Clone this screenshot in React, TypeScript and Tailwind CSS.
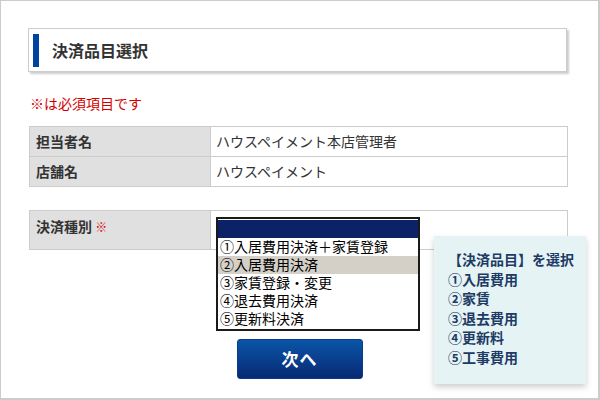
import { useState } from 'react';

const font = { fontFamily: '"Noto Sans CJK JP", "Noto Sans", sans-serif' };

const options = [
  '①入居費用決済＋家賃登録',
  '②入居費用決済',
  '③家賃登録・変更',
  '④退去費用決済',
  '⑤更新料決済',
];

const guide = ['①入居費用', '②家賃', '③退去費用', '④更新料', '⑤工事費用'];

export default function App() {
  const [selected, setSelected] = useState(1);

  return (
    <div
      className="relative w-[600px] h-[400px] bg-white border-t border-l border-r-2 border-b-2 border-[#cccccc] px-[27px] pt-[27px] text-[#333333]"
      style={font}
    >
      <div className="flex items-center h-[44px] w-[539px] bg-white border border-[#cccccc] shadow-[2px_2px_2px_rgba(0,0,0,0.2)]">
        <div className="ml-[4px] w-[6px] h-[33px] bg-[#0043a0]" />
        <h1 className="ml-[13px] text-[16px] font-bold leading-none text-[#333333]">決済品目選択</h1>
      </div>

      <p className="mt-[21px] ml-[2px] text-[14px] leading-[20px] text-[#d40000]">※は必須項目です</p>

      <table className="mt-[13px] ml-[1px] w-[539px] border-collapse text-[14px]">
        <tbody>
          <tr className="h-[30px]">
            <th className="w-[181px] bg-[#e0e0e0] border border-[#cccccc] pl-[6px] text-left font-bold">担当者名</th>
            <td className="border border-[#cccccc] pl-[5px]">ハウスペイメント本店管理者</td>
          </tr>
          <tr className="h-[30px]">
            <th className="bg-[#e0e0e0] border border-[#cccccc] pl-[6px] text-left font-bold">店舗名</th>
            <td className="border border-[#cccccc] pl-[5px]">ハウスペイメント</td>
          </tr>
        </tbody>
      </table>

      <div className="mt-[23px] ml-[1px] flex w-[539px] h-[40px] border border-[#cccccc] text-[14px]">
        <div className="w-[181px] bg-[#e0e0e0] border-r border-[#cccccc] pl-[6px] pt-[5px] leading-[20px] font-bold">
          決済種別 <span className="text-[12px] text-[#d40000]">※</span>
        </div>
        <div className="relative flex-1 bg-white">
          <div className="absolute left-[5px] top-[6px] z-10 w-[204px] border-2 border-[#1a1a1a] bg-white py-[1px]">
            <div className="h-[18px] bg-[#0b2266]" />
            <ul>
              {options.map((o, i) => (
                <li
                  key={o}
                  onClick={() => setSelected(i)}
                  className={`h-[18px] pl-[2px] text-[14px] leading-[17px] text-black cursor-default ${
                    selected === i ? 'bg-[#d4d0c8]' : ''
                  }`}
                >
                  {o}
                </li>
              ))}
            </ul>
          </div>
        </div>
      </div>

      <div className="mt-[89px] flex justify-center">
        <button className="w-[126px] h-[40px] rounded-[3px] border border-[#0a3a88] bg-gradient-to-b from-[#0a55a8] to-[#082a74] text-white text-[17px] font-bold tracking-[1px]">
          次へ
        </button>
      </div>

      <div className="absolute left-[433px] top-[235px] z-20 w-[152px] h-[148px] bg-[#e6f3f5] shadow-[0_3px_6px_rgba(0,0,0,0.2)] pl-[14px] pt-[14px] text-[14px] font-bold leading-[19.6px] text-[#1d3b64]">
        <p>【決済品目】を選択</p>
        {guide.map((g) => (
          <p key={g}>{g}</p>
        ))}
      </div>
    </div>
  );
}
